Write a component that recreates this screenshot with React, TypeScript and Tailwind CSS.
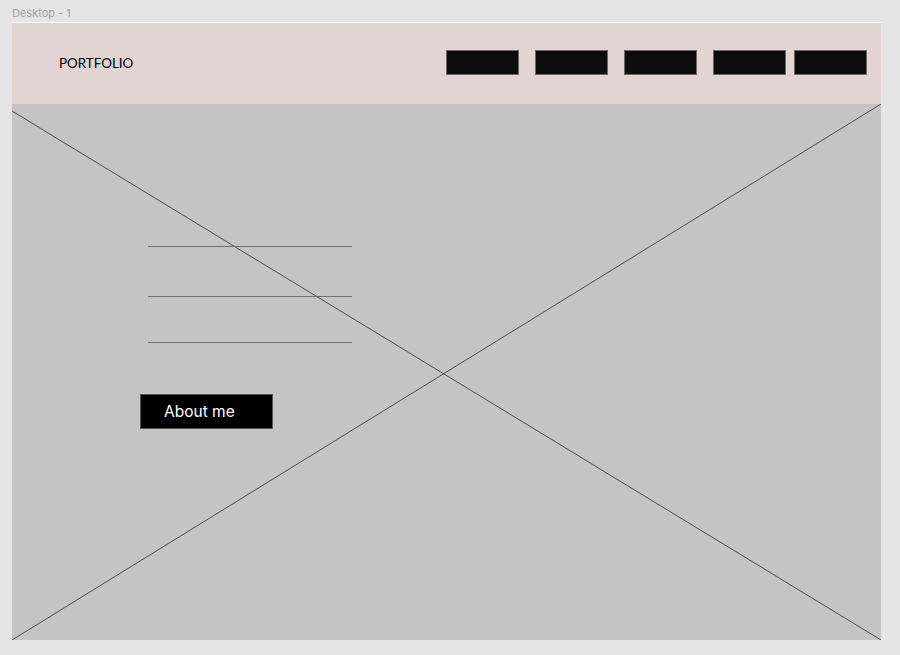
export default function App() {
  const navItems = [0, 1, 2, 3, 4];

  return (
    <div className="h-[655px] w-[900px] bg-[#e5e5e5] overflow-hidden" style={{ fontFamily: "Inter, 'Noto Sans', sans-serif" }}>
      <div className="h-[22px] pl-[12px] pt-[7px] text-[11px] leading-[12px] text-[#a0a0a0]">Desktop - 1</div>

      <div className="ml-[12px] w-[869px] border-t border-white">
        {/* header */}
        <header className="h-[81px] bg-[#e2d4d3] flex items-start justify-between pl-[47px] pr-[14px]">
          <span className="mt-[32px] text-[13.4px] leading-[16px] text-black" style={{ fontFamily: "Lato, Inter, sans-serif" }}>PORTFOLIO</span>
          <nav className="mt-[27px] flex items-center">
            {navItems.map((i) => (
              <div
                key={i}
                className={`h-[25px] w-[73px] bg-[#0c0c0c] border border-[#6e6565] ${i === 0 ? "" : i === 4 ? "ml-[8px]" : "ml-[16px]"}`}
              />
            ))}
          </nav>
        </header>

        {/* hero placeholder */}
        <section className="relative h-[536px] bg-[#c4c4c4]">
          <svg className="absolute inset-0" width="869" height="536" viewBox="0 0 869 536">
            <line x1="0" y1="7" x2="869" y2="536" stroke="#2f2f2f" strokeWidth="0.8" />
            <line x1="0" y1="536" x2="869" y2="0" stroke="#2f2f2f" strokeWidth="0.8" />
          </svg>

          <div className="relative flex flex-col pt-[142px] pl-[136px]">
            <div className="h-px w-[204px] bg-[#707070]" />
            <div className="h-px w-[204px] bg-[#707070] mt-[49px]" />
            <div className="h-px w-[204px] bg-[#707070] mt-[45px]" />
            <button className="-ml-[8px] mt-[51px] h-[35px] w-[133px] bg-black border border-[#555] text-left pl-[23px] text-white text-[15.5px]">
              About me
            </button>
          </div>
        </section>
      </div>
    </div>
  );
}
